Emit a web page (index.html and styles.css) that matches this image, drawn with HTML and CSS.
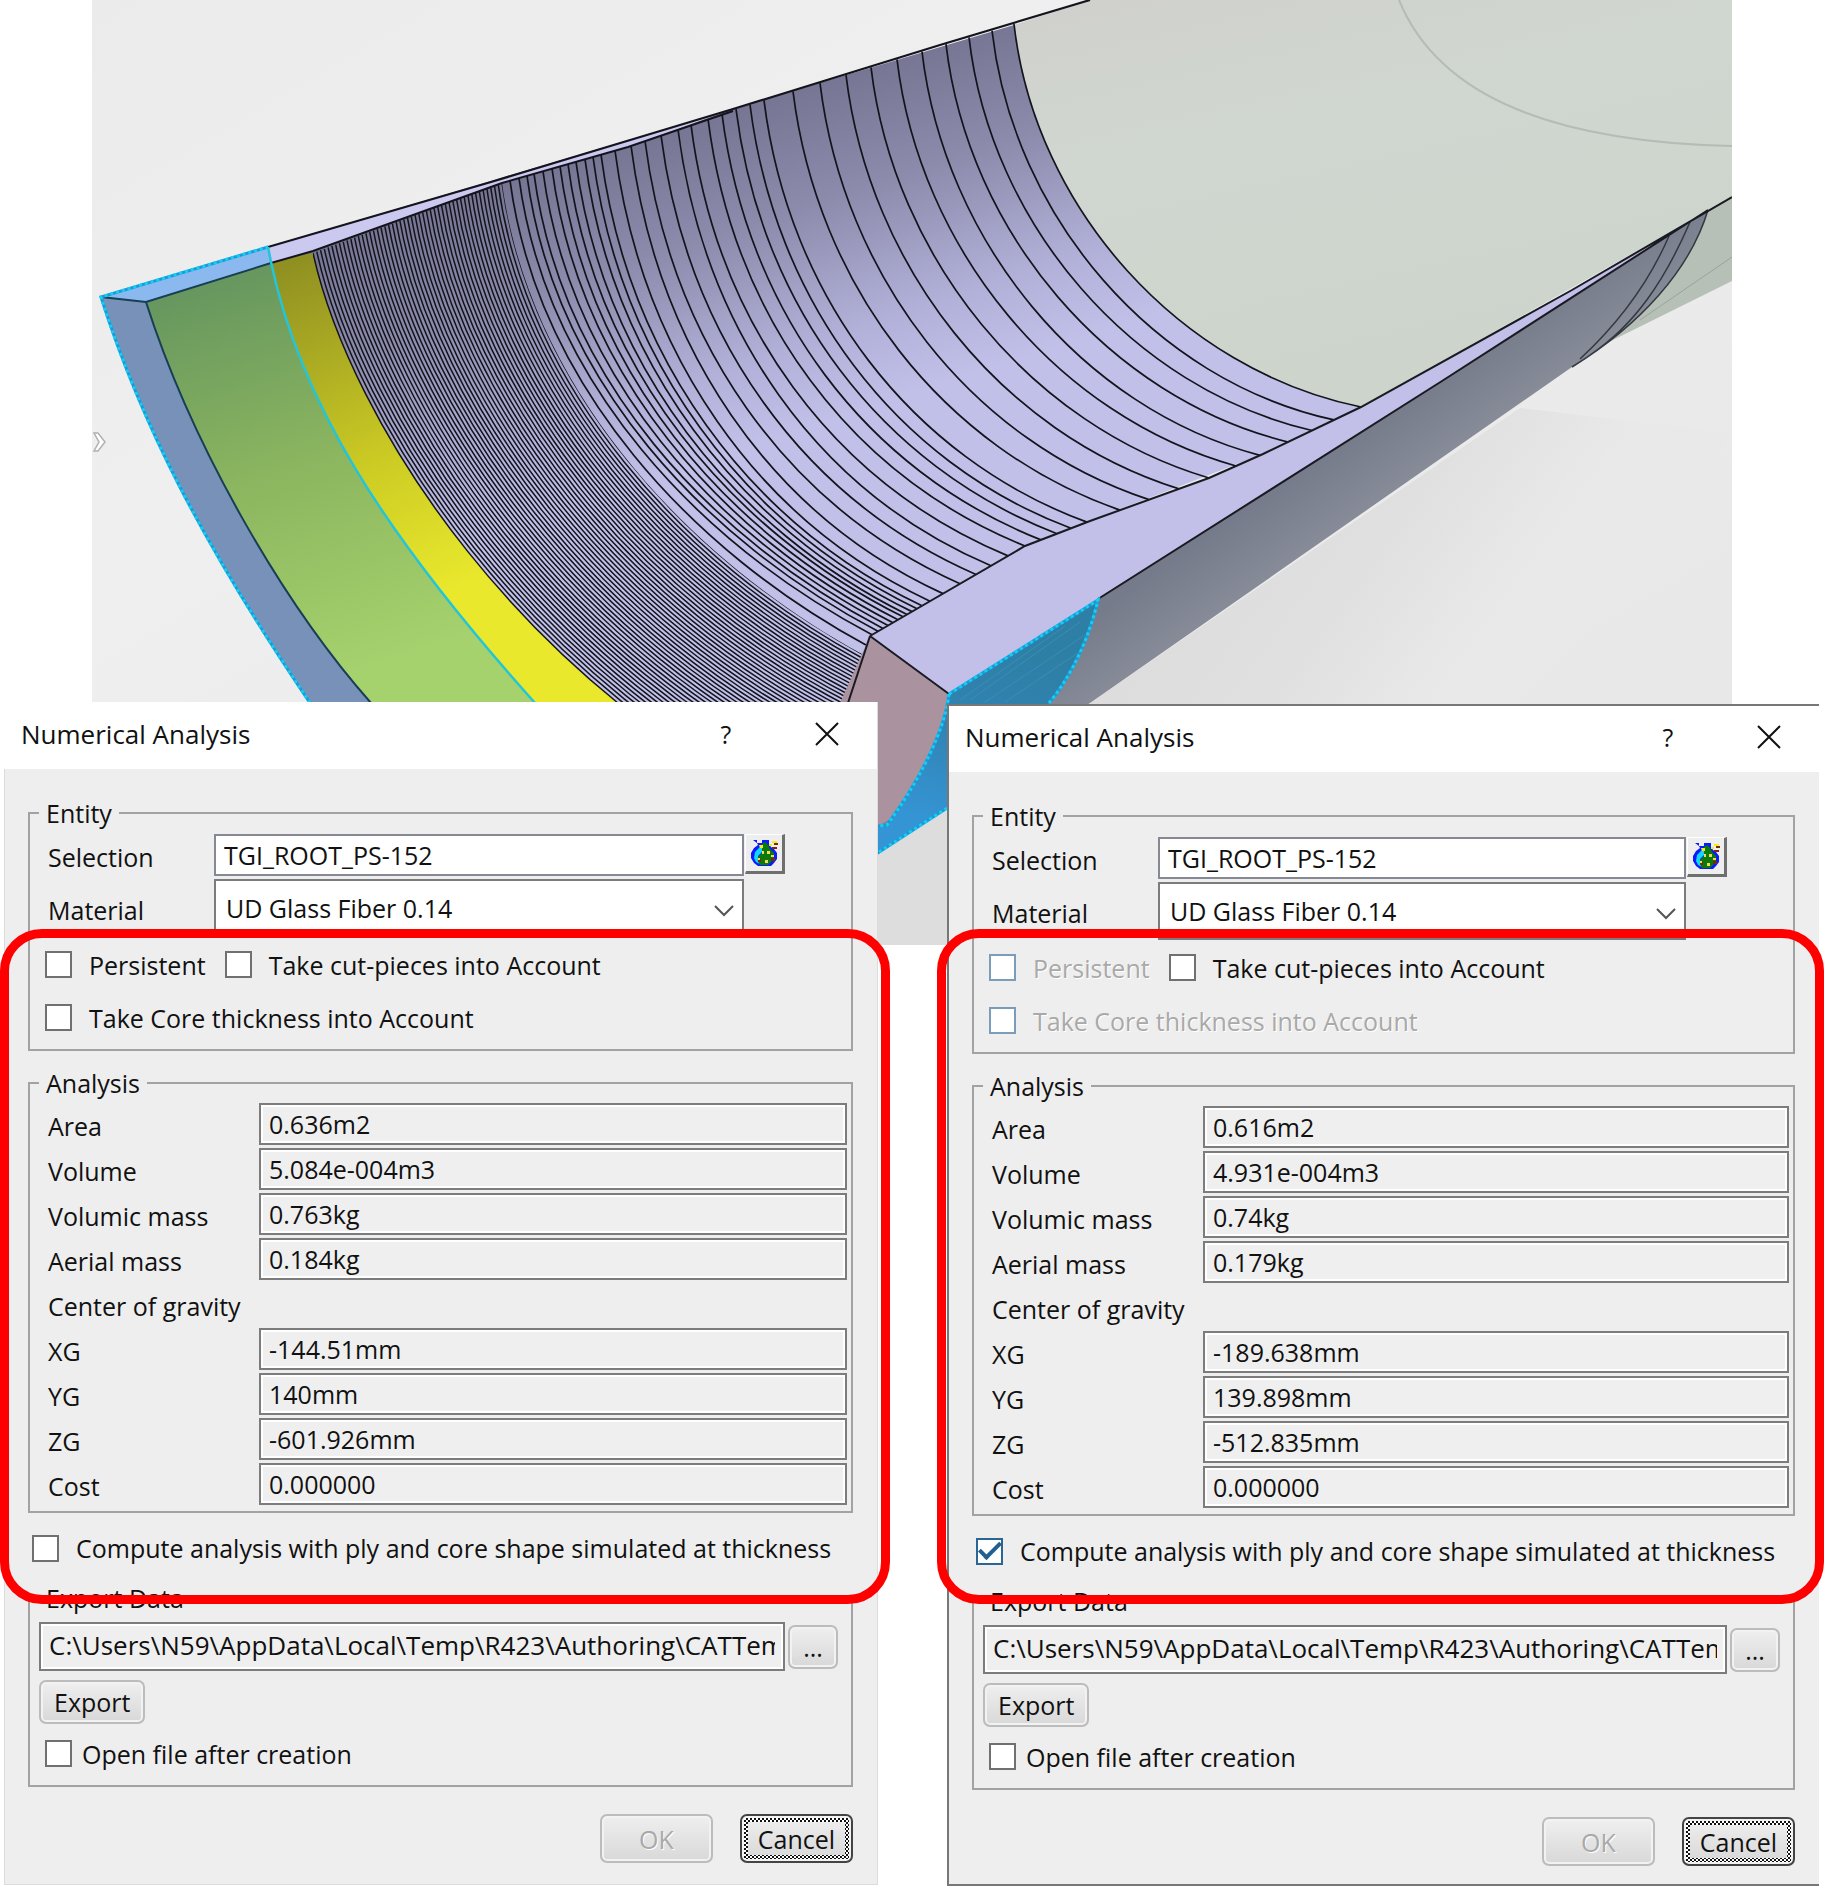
FILE: index.html
```html
<!DOCTYPE html>
<html lang="en">
<head>
<meta charset="utf-8">
<title>Numerical Analysis</title>
<link rel="stylesheet" href="styles.css">
</head>
<body>
<main class="page">
  <svg class="scene" viewBox="92 0 1640 945" role="img" aria-label="Blade root composite part">
    <defs>
      <linearGradient id="bg" x1="0" y1="0" x2="1" y2="1">
        <stop offset="0" stop-color="#ebebeb"/><stop offset=".3" stop-color="#efefef"/><stop offset="1" stop-color="#e6e6e6"/>
      </linearGradient>
      <linearGradient id="inner" gradientUnits="userSpaceOnUse" x1="700" y1="120" x2="800" y2="430">
        <stop offset="0" stop-color="#767593"/><stop offset=".35" stop-color="#8c8bac"/><stop offset=".75" stop-color="#b1b0d8"/><stop offset="1" stop-color="#c1c0e8"/>
      </linearGradient>
      <linearGradient id="green" gradientUnits="userSpaceOnUse" x1="200" y1="280" x2="330" y2="680">
        <stop offset="0" stop-color="#66965f"/><stop offset=".5" stop-color="#8cb65f"/><stop offset="1" stop-color="#a5d26d"/>
      </linearGradient>
      <linearGradient id="yellow" gradientUnits="userSpaceOnUse" x1="290" y1="260" x2="430" y2="600">
        <stop offset="0" stop-color="#8f8f22"/><stop offset=".6" stop-color="#cccb24"/><stop offset="1" stop-color="#e9e82d"/>
      </linearGradient>
      <linearGradient id="skin" gradientUnits="userSpaceOnUse" x1="1300" y1="470" x2="1370" y2="570">
        <stop offset="0" stop-color="#757b8a"/><stop offset=".6" stop-color="#888c99"/><stop offset="1" stop-color="#8f929d"/>
      </linearGradient>
      <linearGradient id="liner" x1="0" y1="0" x2=".4" y2="1">
        <stop offset="0" stop-color="#d0d0cd"/><stop offset=".4" stop-color="#d0d7d0"/><stop offset="1" stop-color="#ccd4cb"/>
      </linearGradient>
      <linearGradient id="face" gradientUnits="userSpaceOnUse" x1="1020" y1="640" x2="960" y2="830">
        <stop offset="0" stop-color="#2e7fa5"/><stop offset=".5" stop-color="#3183b2"/><stop offset="1" stop-color="#3594d4"/>
      </linearGradient>
      <linearGradient id="shade" gradientUnits="userSpaceOnUse" x1="1200" y1="560" x2="1420" y2="720">
        <stop offset="0" stop-color="#dddddd"/><stop offset=".5" stop-color="#e0e0e0"/><stop offset="1" stop-color="#e9e9e9"/>
      </linearGradient>
      <clipPath id="denseClip"><path d="M313 251 502 183C530 390 690 560 862 654L848 720H300Z"/></clipPath>
    </defs>
    <rect x="92" width="1640" height="945" fill="url(#bg)"/>
    <path d="M1732 433 1520 408 1090 703 870 850V945H1200Q1500 780 1732 433Z" fill="url(#shade)"/>
    <path d="M1708 210 1732 197V281L1605 344 1572 367Z" fill="#b7c0b7"/>
    <path d="M1732 257 1640 320" stroke="#9aa39a" fill="none"/>
    <path d="M1014 25 1090 0H1732V197L1361 407C1180 370 1035 210 1014 25Z" fill="url(#liner)"/>
    <path d="M1399 0C1440 100 1560 142 1732 146" stroke="#b5bcb5" stroke-width="2" fill="none"/>
    <path d="M268 247 733 109 1014 25C1035 210 1180 370 1361 407L1263 454 1025 546 870 636 848 703H310Z" fill="url(#inner)"/>
    <path d="M271 262 313 253C350 420 520 690 820 830H535C400 600 310 420 271 262Z" fill="url(#yellow)"/>
    <path d="M146 302 271 262C300 400 380 530 535 703V760H371V703C280 600 190 440 146 302Z" fill="url(#green)"/>
    <path d="M101 297 146 302C190 440 280 600 371 703H310C200 540 140 420 101 297Z" fill="#7791b9"/>
    <path d="M101 297 268 247 271 262 146 302Z" fill="#8bb9ef"/>
    <path d="M268 247 491 182 733 109 628 147 502 183 313 251 271 264Z" fill="#cbc9ef"/>
    <g fill="none" stroke="#14141d">
      <path id="dense" clip-path="url(#denseClip)" stroke-width="1.5"/>
      <path id="plies" stroke-width="1.7"/>
      <path d="M268 247 491 182 733 109 940 45 1090 0" stroke-width="2.2"/>
      <path d="M271 263 313 251 502 183 628 147 733 111" stroke-width="2"/>
      <path d="M101 297 146 302 271 263M146 302C190 440 280 600 371 703" stroke="#173e55" stroke-width="2"/>
    </g>
    <path d="M870 636 1025 546 1090 521 1209 478 1263 454 1361 407 1572 290 1708 210 1442 381 1098 599 949 694Z" fill="#c2c0e8"/>
    <path d="M1098 599 1442 381 1708 210C1690 270 1640 325 1572 367L1090 703 878 860V800Z" fill="url(#skin)"/>
    <path d="M1708 210C1690 270 1640 325 1572 367M1690 222C1665 280 1635 325 1590 355M1669 236C1650 280 1620 322 1580 359" fill="none" stroke="#34383f" stroke-width="1.5"/>
    <path d="M1090 703 870 860V945H1150V703Z" fill="#dddddd"/>
    <path d="M870 636 949 694C945 760 900 820 878 825H840V703Z" fill="#aa929f"/>
    <path d="M949 694 1098 600C1085 655 1060 690 1049 703L947 808 870 858V825H887C920 780 945 730 949 694Z" fill="url(#face)"/>
    <path d="M970 700 1080 622M985 702 1085 635M1005 702 1082 650M960 700 1065 626" stroke="#3f97bd" fill="none" opacity=".6"/>
    <path d="M870 636 1025 546 1090 521 1209 478 1263 454 1361 407 1572 290 1732 197M1708 210 1442 381 1098 599M870 636 949 694M870 636 848 703" fill="none" stroke="#1a1a22" stroke-width="2"/>
    <g fill="none" stroke="#1d9ad6" stroke-width="3">
      <path d="M310 703C200 540 140 420 101 297L268 247M949 694 1098 600C1085 655 1060 690 1049 703M949 694C945 730 920 780 887 825L870 827M947 808 870 858"/>
    </g>
    <g fill="none" stroke="#12d0f5" stroke-width="3" stroke-dasharray="3 3">
      <path d="M310 703C200 540 140 420 101 297L268 247M949 694 1098 600C1085 655 1060 690 1049 703M949 694C945 730 920 780 887 825L870 827M947 808 870 858"/>
    </g>
    <path d="M268 247 271 262C300 400 380 530 535 703" fill="none" stroke="#23c5d8" stroke-width="2.5"/>
    <path d="M94 433h4l7 9-7 9h-4l5-9Z" fill="#fff" stroke="#b0b0b0" stroke-width="1.5"/>
  </svg>

  <div class="dialogs">
    <div class="slot">
      <form class="dialog">
        <header class="titlebar">
          <h1 class="title">Numerical Analysis</h1>
          <button class="tool" type="button" aria-label="Help">?</button>
          <button class="tool" type="button" aria-label="Close"><svg class="close" viewBox="0 0 24 24"><path d="M1 1 23 23M23 1 1 23"/></svg></button>
        </header>
        <div class="content">
          <fieldset class="group entity">
            <legend>Entity</legend>
            <div class="pick-row">
              <label for="sel1">Selection</label>
              <input class="text white" id="sel1" type="text" value="TGI_ROOT_PS-152">
              <button class="picker" type="button" aria-label="Choose entity"><svg viewBox="0 0 28 28"><use href="#flask"/></svg></button>
            </div>
            <div class="pick-row">
              <label for="mat1">Material</label>
              <div class="combo"><select id="mat1"><option>UD Glass Fiber 0.14</option></select><svg class="chevron" viewBox="0 0 20 12"><path d="M1 1 10 10 19 1"/></svg></div>
            </div>
            <div class="checks">
              <label class="check"><input type="checkbox">Persistent</label>
              <label class="check"><input type="checkbox">Take cut-pieces into Account</label>
            </div>
            <div class="checks">
              <label class="check"><input type="checkbox">Take Core thickness into Account</label>
            </div>
          </fieldset>
          <fieldset class="group analysis">
            <legend>Analysis</legend>
            <div class="value-row"><label for="a1">Area</label><input class="text" id="a1" readonly value="0.636m2"></div>
            <div class="value-row"><label for="a2">Volume</label><input class="text" id="a2" readonly value="5.084e-004m3"></div>
            <div class="value-row"><label for="a3">Volumic mass</label><input class="text" id="a3" readonly value="0.763kg"></div>
            <div class="value-row"><label for="a4">Aerial mass</label><input class="text" id="a4" readonly value="0.184kg"></div>
            <div class="value-row"><span class="caption">Center of gravity</span></div>
            <div class="value-row"><label for="a5">XG</label><input class="text" id="a5" readonly value="-144.51mm"></div>
            <div class="value-row"><label for="a6">YG</label><input class="text" id="a6" readonly value="140mm"></div>
            <div class="value-row"><label for="a7">ZG</label><input class="text" id="a7" readonly value="-601.926mm"></div>
            <div class="value-row"><label for="a8">Cost</label><input class="text" id="a8" readonly value="0.000000"></div>
          </fieldset>
          <label class="check compute"><input type="checkbox">Compute analysis with ply and core shape simulated at thickness</label>
          <fieldset class="group export">
            <legend>Export Data</legend>
            <div class="path-row">
              <input class="text" readonly aria-label="Export path" value="C:\Users\N59\AppData\Local\Temp\R423\Authoring\CATTemp">
              <button class="btn browse" type="button">...</button>
            </div>
            <button class="btn" type="button">Export</button>
            <label class="check tight"><input type="checkbox">Open file after creation</label>
          </fieldset>
          <footer class="actions">
            <button class="btn wide" type="button" disabled>OK</button>
            <button class="btn wide focused" type="button"><span>Cancel</span></button>
          </footer>
        </div>
      </form>
      <div class="highlight"></div>
    </div>

    <div class="slot">
      <form class="dialog framed">
        <header class="titlebar">
          <h1 class="title">Numerical Analysis</h1>
          <button class="tool" type="button" aria-label="Help">?</button>
          <button class="tool" type="button" aria-label="Close"><svg class="close" viewBox="0 0 24 24"><path d="M1 1 23 23M23 1 1 23"/></svg></button>
        </header>
        <div class="content">
          <fieldset class="group entity">
            <legend>Entity</legend>
            <div class="pick-row">
              <label for="sel2">Selection</label>
              <input class="text white" id="sel2" type="text" value="TGI_ROOT_PS-152">
              <button class="picker" type="button" aria-label="Choose entity"><svg viewBox="0 0 28 28"><use href="#flask"/></svg></button>
            </div>
            <div class="pick-row">
              <label for="mat2">Material</label>
              <div class="combo"><select id="mat2"><option>UD Glass Fiber 0.14</option></select><svg class="chevron" viewBox="0 0 20 12"><path d="M1 1 10 10 19 1"/></svg></div>
            </div>
            <div class="checks">
              <label class="check off"><input type="checkbox" disabled>Persistent</label>
              <label class="check"><input type="checkbox">Take cut-pieces into Account</label>
            </div>
            <div class="checks">
              <label class="check off"><input type="checkbox" disabled>Take Core thickness into Account</label>
            </div>
          </fieldset>
          <fieldset class="group analysis">
            <legend>Analysis</legend>
            <div class="value-row"><label for="b1">Area</label><input class="text" id="b1" readonly value="0.616m2"></div>
            <div class="value-row"><label for="b2">Volume</label><input class="text" id="b2" readonly value="4.931e-004m3"></div>
            <div class="value-row"><label for="b3">Volumic mass</label><input class="text" id="b3" readonly value="0.74kg"></div>
            <div class="value-row"><label for="b4">Aerial mass</label><input class="text" id="b4" readonly value="0.179kg"></div>
            <div class="value-row"><span class="caption">Center of gravity</span></div>
            <div class="value-row"><label for="b5">XG</label><input class="text" id="b5" readonly value="-189.638mm"></div>
            <div class="value-row"><label for="b6">YG</label><input class="text" id="b6" readonly value="139.898mm"></div>
            <div class="value-row"><label for="b7">ZG</label><input class="text" id="b7" readonly value="-512.835mm"></div>
            <div class="value-row"><label for="b8">Cost</label><input class="text" id="b8" readonly value="0.000000"></div>
          </fieldset>
          <label class="check compute"><input type="checkbox" checked>Compute analysis with ply and core shape simulated at thickness</label>
          <fieldset class="group export">
            <legend>Export Data</legend>
            <div class="path-row">
              <input class="text" readonly aria-label="Export path" value="C:\Users\N59\AppData\Local\Temp\R423\Authoring\CATTemp">
              <button class="btn browse" type="button">...</button>
            </div>
            <button class="btn" type="button">Export</button>
            <label class="check tight"><input type="checkbox">Open file after creation</label>
          </fieldset>
          <footer class="actions">
            <button class="btn wide" type="button" disabled>OK</button>
            <button class="btn wide focused" type="button"><span>Cancel</span></button>
          </footer>
        </div>
      </form>
      <div class="highlight"></div>
    </div>
  </div>
</main>

<svg class="sprite" aria-hidden="true">
  <symbol id="flask" viewBox="0 0 28 28">
    <path d="M3 1h4v3h5V1h7v4l2 3 3 2 3 4v6l-3 4-3 3H8l-4-3-3-5v-5l3-5 4-3-1-2-4-3Z" fill="#0a1cff"/>
    <path d="M5 13l5-5h2v5l-4 4v5l2 3-4-2-2-4Z" fill="#12d8f4"/>
    <path d="M12 5l3-2 3 3 2 4 4 4v5l-3 4-3 3h-8l-2-4v-4l4-4Z" fill="#0a7a0a"/>
    <path d="M9 6h4v3h-3ZM22 2h5v2h-5ZM19 5h3v2h-3Z" fill="#f6ee10"/>
    <path d="M24 4h4v2h-4ZM22 8h5v2h-5ZM8 20h3v3H8ZM21 19h4v3h-4Z" fill="#7a2a08"/>
    <path d="M12 12h2v3h-2ZM17 12h3v3h-3ZM15 21h3v3h-3ZM21 16h3v2h-3ZM8 19h2v2H8Z" fill="#ffd45a"/>
  </symbol>
</svg>
<script src="scene.js"></script>
</body>
</html>
```
FILE: styles.css
```css
* { box-sizing: border-box; }

body {
  margin: 0;
  background: #fff;
  color: #111;
  font: 25px/32px "Open Sans", "Noto Sans", sans-serif;
}

button, input, select { font: inherit; color: inherit; }

.page { padding: 0; overflow: hidden; }

.scene {
  display: block;
  width: calc(100% - 184px);
  margin: 0 92px;
}

.sprite { display: none; }

.dialogs {
  display: grid;
  grid-template-columns: 1fr 1fr;
  gap: 70px;
  align-items: start;
  margin: -242px 5px 0 5px;
  position: relative;
}

.slot { position: relative; min-width: 0; }

.dialog {
  background: #eee;
  box-shadow: 0 0 0 1px #dcdcdc;
}

.dialog.framed {
  margin-top: 1px;
  border: solid #777;
  border-width: 2px 0 2px 2px;
  box-shadow: none;
}

.titlebar {
  display: flex;
  align-items: center;
  height: 66px;
  padding: 0 38px 4px 16px;
  background: #fff;
}

.slot:first-child .titlebar { margin-left: -5px; padding-left: 21px; box-shadow: 0 -1px #fff; }

.title {
  flex: 1;
  margin: 0;
  font: inherit;
  font-size: 26px;
}

.tool {
  display: grid;
  place-items: center;
  width: 24px;
  height: 32px;
  margin-left: 77px;
  padding: 0;
  border: 0;
  background: none;
}

.close { width: 24px; height: 24px; }
.close path { fill: none; stroke: #111; stroke-width: 2; }

.content { padding: 28px 24px 21px 23px; }
.framed .content { padding-bottom: 18px; }

.group {
  min-width: 0;
  margin: 0;
  padding: 0 4px 0 9px;
  border: 2px solid #a2a2a2;
}

legend { padding: 0 7px; }

.entity { padding-top: 5px; padding-bottom: 5px; }

.pick-row {
  display: grid;
  grid-template-columns: 166px 1fr 40px;
  column-gap: 1px;
  height: 42px;
  margin-bottom: 3px;
  padding: 0 62px 0 8px;
}

.pick-row + .pick-row { height: 58px; margin-bottom: 1px; }

.pick-row label, .value-row label, .caption { padding: 7px 0 0 1px; }
.pick-row + .pick-row label { padding-top: 15px; }

.text {
  width: 100%;
  min-width: 0;
  height: 42px;
  padding: 0 8px;
  border: 2px solid #7c7c7c;
  border-radius: 0;
  background: #efefef;
  box-shadow: inset 0 0 0 2px #fff;
  outline: 0;
}

.text.white { background: #fff; border-color: #868994; }

.picker {
  width: 40px;
  height: 40px;
  padding: 4px;
  border: solid;
  border-width: 1px 3px 3px 1px;
  border-color: #fff #6f6f6f #6f6f6f #fff;
  background: #eee;
}

.picker svg { display: block; width: 28px; height: 28px; }

.combo { position: relative; }

.combo select {
  width: 100%;
  height: 58px;
  padding: 0 0 0 10px;
  border: 2px solid #7c7c7c;
  border-radius: 0;
  background: #fff;
  appearance: none;
}

.chevron {
  position: absolute;
  top: 26px;
  right: 10px;
  width: 20px;
  height: 12px;
  pointer-events: none;
}

.chevron path { fill: none; stroke: #555; stroke-width: 2; }

.checks {
  display: flex;
  gap: 19px;
  height: 53px;
  padding-left: 6px;
}

.check {
  display: flex;
  align-items: center;
  gap: 17px;
  white-space: nowrap;
}

.check input {
  display: grid;
  place-items: center;
  flex: none;
  width: 27px;
  height: 27px;
  margin: 0;
  border: 2px solid #707070;
  background: #fff;
  appearance: none;
}

.check input:disabled { border-color: #7c9cbc; }
.check input:checked { border-color: #2b6592; }

.check input:checked::before {
  content: "";
  width: 18px;
  height: 8px;
  margin-top: -6px;
  border: solid #1f5f92;
  border-width: 0 0 4px 4px;
  transform: rotate(-45deg);
}

.off { color: #a9a9a9; text-shadow: 1px 1px #fff; }

.analysis { margin-top: 16px; padding-top: 4px; padding-bottom: 3px; }

.value-row {
  display: grid;
  grid-template-columns: 212px 1fr;
  height: 45px;
  padding-left: 8px;
}

.compute { height: 28px; margin: 21px 0 20px 4px; }

.export { padding: 8px 13px 18px 9px; }

.path-row {
  display: grid;
  grid-template-columns: 1fr 50px;
  gap: 3px;
  align-items: center;
  margin-bottom: 9px;
}

.path-row .text { height: 49px; padding-bottom: 4px; font-size: 26px; }

.tight { gap: 10px; height: 27px; margin: 16px 0 0 6px; }

.btn {
  display: block;
  height: 44px;
  padding: 0 13px;
  border: 2px solid #bcbcbc;
  border-radius: 7px;
  background: linear-gradient(#efefef, #d8d8d8);
  box-shadow: inset 0 0 0 2px #f2f2f2;
}

.btn:disabled { color: #a9a9a9; text-shadow: 1px 1px #fff; }

.actions {
  display: flex;
  justify-content: flex-end;
  gap: 27px;
  margin-top: 27px;
}

.wide { width: 113px; height: 49px; padding: 0; }

.focused {
  padding: 2px;
  border-color: #444;
}

.focused span {
  display: grid;
  place-items: center;
  height: 100%;
  border: 4px solid transparent;
  background:
    linear-gradient(#ececec, #dadada) padding-box,
    repeating-conic-gradient(#111 0 25%, #fff 0 50%) 0 0 / 4px 4px border-box;
}

.highlight {
  position: absolute;
  top: 226px;
  left: -5px;
  right: -13px;
  height: 675px;
  border: 9px solid #f00;
  border-radius: 42px;
  pointer-events: none;
}

.framed + .highlight { left: -10px; right: -5px; }
```
FILE: scene.js
```js
// Ply boundaries on the inner surface, blended between the bounding curves.
function mix(a, b, t) { return a + (b - a) * t; }

function yOn(line, x) {
  for (let i = 1; i < line.length; i++) {
    const [x0, y0] = line[i - 1], [x1, y1] = line[i];
    if (x <= x1) return mix(y0, y1, (x - x0) / (x1 - x0));
  }
  return line[line.length - 1][1];
}

const first = [313, 253, 350, 420, 520, 690, 820, 830];
const last = [502, 183, 530, 390, 690, 560, 862, 654];
const count = 50;
let d = "";
for (let i = 0; i <= count; i++) {
  const p = first.map((v, k) => mix(v, last[k], i / count));
  d += `M${p[0]} ${p[1]}C${p.slice(2).join(" ")}`;
}
document.getElementById("dense").setAttribute("d", d);

const topEdge = [[502, 183], [628, 147], [733, 110], [940, 46], [1014, 24]];
const cutEdge = [[862, 654], [870, 636], [1025, 546], [1090, 521], [1209, 478], [1263, 454], [1361, 407]];
const plies = [
  [510, 866], [519, 872], [527, 878], [534, 883], [543, 888], [552, 893], [560, 898], [568, 903],
  [576, 907], [585, 912], [593, 917], [601, 922], [615, 930], [631, 943], [645, 960], [661, 976],
  [678, 991], [691, 1008], [708, 1025], [722, 1041], [736, 1057], [750, 1071], [764, 1087],
  [793, 1120], [820, 1149], [846, 1179], [871, 1209], [897, 1236], [922, 1260], [946, 1288],
  [969, 1312], [992, 1334], [1014, 1361]
];
d = "";
for (const [a, b] of plies) {
  const t = (a - 502) / 512, ya = yOn(topEdge, a), yb = yOn(cutEdge, b);
  d += `M${a} ${ya}C${a + mix(28, 21, t)} ${ya + mix(207, 185, t)} ${b - mix(172, 181, t)} ${yb - mix(94, 37, t)} ${b} ${yb}`;
}
document.getElementById("plies").setAttribute("d", d);
```
